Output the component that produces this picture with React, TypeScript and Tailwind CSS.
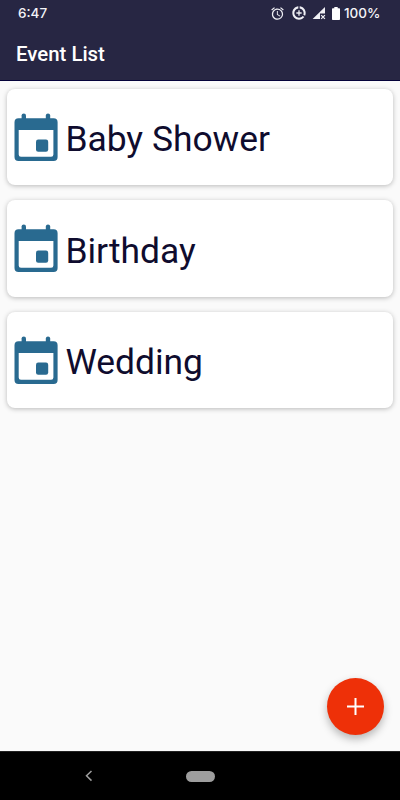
const events = ["Baby Shower", "Birthday", "Wedding"];

const AlarmIcon = () => (
  <svg viewBox="0 0 24 24" className="h-[15px] w-[15px]" fill="#efeff4">
    <path d="M22 5.72l-4.6-3.86-1.29 1.53 4.6 3.86L22 5.72zM7.88 3.39L6.6 1.86 2 5.71l1.29 1.53 4.59-3.85zM12.5 8H11v6l4.75 2.85.75-1.23-4-2.37V8zM12 4c-4.97 0-9 4.03-9 9s4.02 9 9 9a9 9 0 0 0 0-18zm0 16c-3.87 0-7-3.13-7-7s3.13-7 7-7 7 3.13 7 7-3.13 7-7 7z" />
  </svg>
);

const DataSaverIcon = () => (
  <svg viewBox="0 0 24 24" className="h-[16px] w-[16px]" fill="#efeff4">
    <path d="M13 2.05v3.03c3.39.49 6 3.39 6 6.92 0 .9-.18 1.75-.48 2.54l2.6 1.53c.56-1.24.88-2.62.88-4.07 0-5.18-3.95-9.45-9-9.95zM12 19c-3.87 0-7-3.13-7-7 0-3.53 2.61-6.43 6-6.92V2.05c-5.06.5-9 4.76-9 9.95 0 5.52 4.47 10 9.99 10 3.31 0 6.24-1.61 8.06-4.09l-2.6-1.53C16.17 17.98 14.21 19 12 19z" />
    <path d="M11 8v3H8v2h3v3h2v-3h3v-2h-3V8z" />
  </svg>
);

const SignalIcon = () => (
  <svg viewBox="0 0 14 13" className="h-[13px] w-[14px]">
    <path d="M13 0v6.6H8V12H0.6z" fill="#efeff4" />
    <path d="M9.2 8.1l3.7 3.8M12.9 8.1l-3.7 3.8" stroke="#efeff4" strokeWidth="1.3" />
  </svg>
);

const BatteryIcon = () => (
  <svg viewBox="0 0 8 13" className="h-[13px] w-[8px]" fill="#ffffff">
    <path d="M2.3 0h3.4v1.3H7c.6 0 1 .4 1 1V12c0 .6-.4 1-1 1H1c-.6 0-1-.4-1-1V2.3c0-.6.4-1 1-1h1.3z" />
  </svg>
);

const CalendarIcon = () => (
  <svg viewBox="0 0 44 48" className="h-[48px] w-[44px] shrink-0" fill="#296a90">
    <rect x="7.6" y="0.4" width="4.4" height="10" rx="2.2" />
    <rect x="31.8" y="0.4" width="4.4" height="10" rx="2.2" />
    <path
      fillRule="evenodd"
      d="M4.5 5.2h35.1a4 4 0 0 1 4 4V44a4 4 0 0 1-4 4H4.500a4 4 0 0 1-4-4V9.200a4 4 0 0 1 4-4zM4.700 17v24.500a2.300 2.300 0 0 0 2.300 2.300h30.100a2.300 2.300 0 0 0 2.300-2.300V17z"
    />
    <rect x="22" y="26.5" width="12.2" height="12.3" rx="2.2" />
  </svg>
);

const StatusBar = () => (
  <div className="flex h-[26px] items-center justify-between pr-[18px] pl-[18px] font-['Inter',sans-serif] text-[13.5px] font-medium text-[#f4f4f8]">
    <span>6:47</span>
    <div className="flex items-center">
      <AlarmIcon />
      <span className="w-[6px]" />
      <DataSaverIcon />
      <span className="w-[5px]" />
      <SignalIcon />
      <span className="w-[6px]" />
      <BatteryIcon />
      <span className="ml-[4px] w-[38px]">100%</span>
    </div>
  </div>
);

const EventCard = ({ name }: { name: string }) => (
  <div className="flex h-[96.5px] items-center rounded-[8px] bg-white pl-[7px] shadow-[0_1px_5px_rgba(0,0,0,0.26)]">
    <CalendarIcon />
    <span className="ml-[7px] pt-[5px] text-[35.4px] leading-[42px] text-[#0f0c2e]">
      {name}
    </span>
  </div>
);

const App = () => {
  return (
    <div className="relative flex h-[800px] w-[400px] flex-col overflow-hidden bg-[#fafafa] font-['Roboto',sans-serif]">
      <header className="h-[81px] border-b border-[#05023a] bg-[#272643]">
        <StatusBar />
        <h1 className="pt-[14px] pl-[16px] text-[20.4px] leading-[28px] font-medium text-white">
          Event List
        </h1>
      </header>

      <main className="flex flex-1 flex-col gap-[15px] pt-[7.5px] pr-[7.5px] pl-[7.4px]">
        {events.map((name) => (
          <EventCard key={name} name={name} />
        ))}
      </main>

      <button
        aria-label="Add event"
        className="absolute top-[678px] left-[327px] flex h-[57px] w-[57px] items-center justify-center rounded-full bg-[#ee3008] shadow-[0_4px_8px_rgba(0,0,0,0.28)]"
      >
        <svg viewBox="0 0 17 17" className="h-[17px] w-[17px]">
          <path d="M8.5 0v17M0 8.5h17" stroke="#fff" strokeWidth="2" />
        </svg>
      </button>

      <nav className="flex h-[49px] items-center border-t border-[#222] bg-black">
        <svg viewBox="0 0 8 12" className="ml-[85px] h-[12px] w-[8px]">
          <path d="M6.5 1L1.5 5.8l5 4.8" fill="none" stroke="#9e9e9e" strokeWidth="1.5" />
        </svg>
        <span className="ml-[93px] h-[11px] w-[29px] rounded-full bg-[#9e9e9e]" />
      </nav>
    </div>
  );
};

export default App;
